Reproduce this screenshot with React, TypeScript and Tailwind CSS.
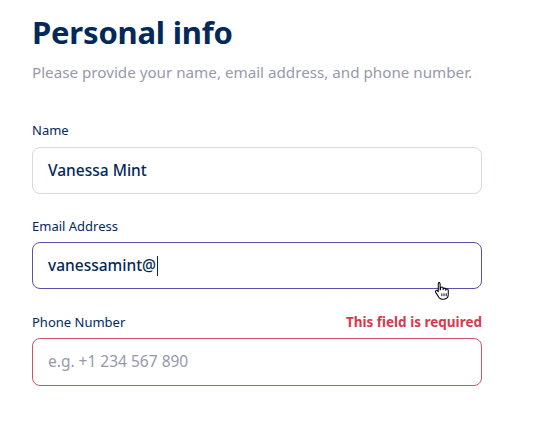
import React from "react";

function HandCursor() {
  return (
    <svg width="17" height="19" viewBox="0 0 18 20" className="absolute left-[434px] top-[281px]">
      <path
        d="M5 1.5c.9 0 1.5.6 1.5 1.5v6.2l.4-.1V7.6c0-.8.6-1.4 1.4-1.4s1.4.6 1.4 1.4v1.3c0-.8.6-1.4 1.4-1.4s1.4.6 1.4 1.4v.8c0-.7.6-1.3 1.3-1.3s1.3.6 1.3 1.3v4.6c0 2.8-2 4.9-4.8 4.9H8.6c-1.4 0-2.5-.6-3.3-1.7L1.8 12c-.5-.7-.3-1.5.3-1.9.6-.4 1.4-.3 1.8.3l.6.8V3c0-.9.6-1.5 1.5-1.5z"
        fill="#fff"
        stroke="#000"
        strokeWidth="1.1"
        strokeLinejoin="round"
      />
      <path d="M8.3 13v3M10.6 13v3M12.9 13v3" stroke="#000" strokeWidth="1" />
    </svg>
  );
}

export default function App() {
  const font = { fontFamily: '"Noto Sans", "Open Sans", sans-serif' };
  return (
    <div className="relative w-[544px] h-[443px] bg-white" style={font}>
      <div className="flex flex-col pl-8 pt-[12px] w-[482px]">
        <h1 className="text-[31px] leading-[40px] font-bold text-[#02295a] tracking-[-0.2px]">Personal info</h1>
        <p className="mt-[9px] text-[15.2px] leading-[22px] text-[#9699ab]">
          Please provide your name, email address, and phone number.
        </p>

        <label className="mt-[38px] text-[13px] leading-[18px] text-[#02295a]">Name</label>
        <div className="mt-[8px] h-[47px] rounded-[8px] border border-[#d6d9e6] flex items-center px-[15px]">
          <span className="text-[15.5px] font-medium text-[#02295a]">Vanessa Mint</span>
        </div>

        <label className="mt-[23px] text-[13px] leading-[18px] text-[#02295a]">Email Address</label>
        <div className="mt-[7px] h-[47px] rounded-[8px] border border-[#5a50ad] flex items-center px-[15px]">
          <span className="text-[15.5px] font-medium text-[#02295a]">vanessamint@</span>
          <span className="ml-[1px] w-[1px] h-[20px] bg-[#02295a]"></span>
        </div>

        <div className="mt-[24px] flex justify-between items-center">
          <label className="text-[13px] leading-[18px] text-[#02295a]">Phone Number</label>
          <span className="text-[13.5px] leading-[18px] font-bold text-[#d9384d]">This field is required</span>
        </div>
        <div className="mt-[7px] h-[48px] rounded-[8px] border border-[#cc5466] flex items-center px-[15px]">
          <span className="text-[15.5px] text-[#9699ab]">e.g. +1 234 567 890</span>
        </div>
      </div>
      <HandCursor />
    </div>
  );
}
